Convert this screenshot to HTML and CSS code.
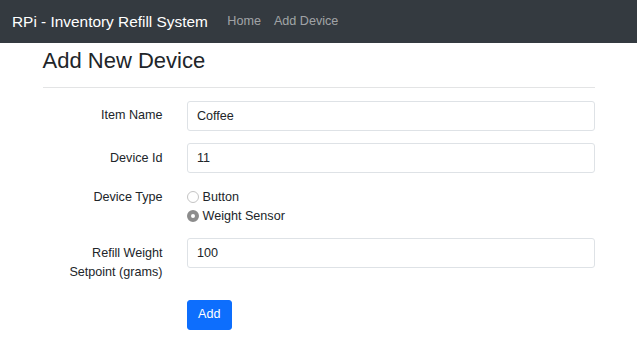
FILE: index.html
```html
<!DOCTYPE html>
<html>
    <head>
        <meta charset="UTF-8">
        <title>RPi - Inventory Refill System - Add Device</title>
        <link rel="stylesheet" href="styles.css">
    </head>

    <body>
        <nav class="navbar">
            <a href="#" class="brand">RPi - Inventory Refill System</a>
            <a href="#" class="nav-link">Home</a>
            <a href="#" class="nav-link">Add Device</a>
        </nav>

        <div class="container">
            <h3 class="page-title">Add New Device</h3>
            <hr>

            <form id="deviceForm" class="device-form">
                <label for="itemName" class="form-label">Item Name</label>
                <input type="text" id="itemName" name="itemName" class="form-input" value="Coffee">

                <label for="deviceId" class="form-label">Device Id</label>
                <input type="text" id="deviceId" name="deviceId" class="form-input" value="11">

                <span class="form-label radio-label">Device Type</span>
                <div class="radio-group">
                    <label class="radio-item">
                        <input type="radio" name="deviceType" value="button">
                        Button
                    </label>
                    <label class="radio-item">
                        <input type="radio" name="deviceType" value="weight" checked>
                        Weight Sensor
                    </label>
                </div>

                <label for="setpoint" class="form-label">Refill Weight Setpoint (grams)</label>
                <input type="text" id="setpoint" name="setpoint" class="form-input" value="100">

                <span></span>
                <div>
                    <button type="submit" class="btn-add">Add</button>
                </div>
            </form>
        </div>
    </body>
</html>
```

FILE: styles.css
```css
body {
    margin: 0;
    font-family: "Liberation Sans", Arial, Helvetica, sans-serif;
    font-size: 12.6px;
    line-height: 19px;
    color: #212529;
    background-color: #fff;
}

/* Top bar */
.navbar {
    display: flex;
    align-items: center;
    height: 43px;
    padding: 0 12px;
    background-color: #343a40;
}

.brand {
    font-size: 15.4px;
    color: #fff;
    text-decoration: none;
    margin-right: 13px;
}

.nav-link {
    color: rgba(255, 255, 255, 0.55);
    text-decoration: none;
    padding: 0 6.5px;
}

.nav-link:hover {
    color: rgba(255, 255, 255, 0.75);
}

/* Page body */
.container {
    max-width: 552px;
    margin: 0 auto;
}

.page-title {
    font-size: 22px;
    font-weight: normal;
    line-height: 1.2;
    margin: 5px 0 0;
}

hr {
    border: none;
    border-top: 1px solid #e3e4e5;
    margin: 12.6px 0;
}

.device-form {
    display: grid;
    grid-template-columns: 120px 1fr;
    column-gap: 24px;
    row-gap: 12.6px;
    align-items: start;
}

.form-label {
    text-align: right;
    padding: 5.5px 0;
}

.radio-label {
    padding: 2px 0 0;
}

.form-input {
    box-sizing: border-box;
    width: 100%;
    height: 30px;
    padding: 0 9.5px;
    border: 1px solid #dee2e6;
    border-radius: 3px;
    font: inherit;
    color: #212529;
}

.radio-group {
    display: flex;
    flex-direction: column;
    padding-top: 2px;
}

.radio-item {
    display: flex;
    align-items: center;
}

.radio-item input {
    appearance: none;
    -webkit-appearance: none;
    box-sizing: border-box;
    width: 12px;
    height: 12px;
    margin: 0 4px 0 0;
    border: 1px solid #c4c4c4;
    border-radius: 50%;
    background-color: #fff;
}

.radio-item input:checked {
    border: 4px solid #8c8c8c;
    background-color: #fff;
}

.btn-add {
    box-sizing: border-box;
    height: 30px;
    padding: 0 10.5px;
    border: 1px solid #0d6efd;
    border-radius: 3px;
    background-color: #0d6efd;
    color: #fff;
    font: inherit;
    cursor: pointer;
}

.btn-add:hover {
    background-color: #0b5ed7;
}
```
